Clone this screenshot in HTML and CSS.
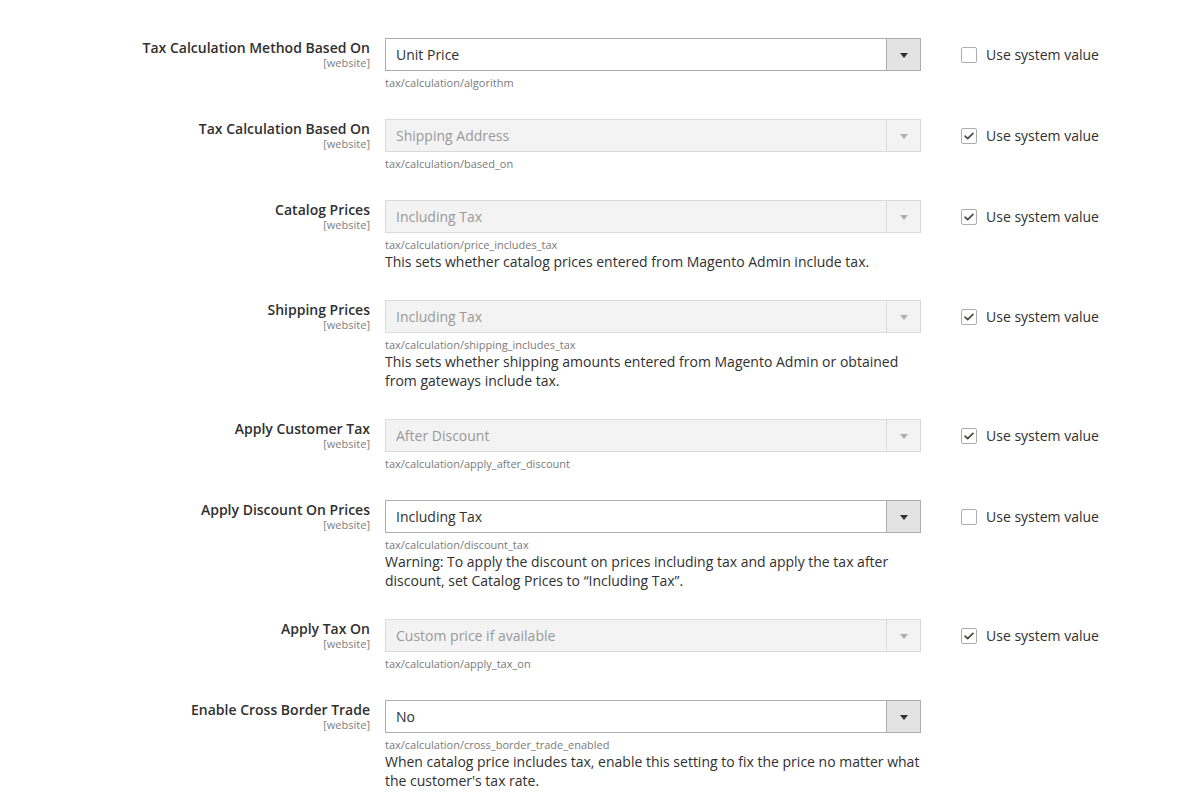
FILE: index.html
```html
<!DOCTYPE html>
<html>
<head>
<meta charset="utf-8">
<link rel="stylesheet" href="styles.css">
</head>
<body>
<div class="config">

  <div class="row">
    <div class="label"><span class="title">Tax Calculation Method Based On</span><span class="scope">[website]</span></div>
    <div class="control">
      <div class="select"><span class="value">Unit Price</span><span class="arrow"></span></div>
      <div class="path">tax/calculation/algorithm</div>
    </div>
    <label class="sys"><span class="box"></span>Use system value</label>
  </div>

  <div class="row">
    <div class="label"><span class="title">Tax Calculation Based On</span><span class="scope">[website]</span></div>
    <div class="control">
      <div class="select disabled"><span class="value">Shipping Address</span><span class="arrow"></span></div>
      <div class="path">tax/calculation/based_on</div>
    </div>
    <label class="sys"><span class="box checked"><svg viewBox="0 0 16 16"><polyline points="3.5,8.2 6.5,11 12.5,5"/></svg></span>Use system value</label>
  </div>

  <div class="row">
    <div class="label"><span class="title">Catalog Prices</span><span class="scope">[website]</span></div>
    <div class="control">
      <div class="select disabled"><span class="value">Including Tax</span><span class="arrow"></span></div>
      <div class="path">tax/calculation/price_includes_tax</div>
      <div class="comment">This sets whether catalog prices entered from Magento Admin include tax.</div>
    </div>
    <label class="sys"><span class="box checked"><svg viewBox="0 0 16 16"><polyline points="3.5,8.2 6.5,11 12.5,5"/></svg></span>Use system value</label>
  </div>

  <div class="row">
    <div class="label"><span class="title">Shipping Prices</span><span class="scope">[website]</span></div>
    <div class="control">
      <div class="select disabled"><span class="value">Including Tax</span><span class="arrow"></span></div>
      <div class="path">tax/calculation/shipping_includes_tax</div>
      <div class="comment">This sets whether shipping amounts entered from Magento Admin or obtained from gateways include tax.</div>
    </div>
    <label class="sys"><span class="box checked"><svg viewBox="0 0 16 16"><polyline points="3.5,8.2 6.5,11 12.5,5"/></svg></span>Use system value</label>
  </div>

  <div class="row">
    <div class="label"><span class="title">Apply Customer Tax</span><span class="scope">[website]</span></div>
    <div class="control">
      <div class="select disabled"><span class="value">After Discount</span><span class="arrow"></span></div>
      <div class="path">tax/calculation/apply_after_discount</div>
    </div>
    <label class="sys"><span class="box checked"><svg viewBox="0 0 16 16"><polyline points="3.5,8.2 6.5,11 12.5,5"/></svg></span>Use system value</label>
  </div>

  <div class="row">
    <div class="label"><span class="title">Apply Discount On Prices</span><span class="scope">[website]</span></div>
    <div class="control">
      <div class="select"><span class="value">Including Tax</span><span class="arrow"></span></div>
      <div class="path">tax/calculation/discount_tax</div>
      <div class="comment">Warning: To apply the discount on prices including tax and apply the tax after discount, set Catalog Prices to “Including Tax”.</div>
    </div>
    <label class="sys"><span class="box"></span>Use system value</label>
  </div>

  <div class="row">
    <div class="label"><span class="title">Apply Tax On</span><span class="scope">[website]</span></div>
    <div class="control">
      <div class="select disabled"><span class="value">Custom price if available</span><span class="arrow"></span></div>
      <div class="path">tax/calculation/apply_tax_on</div>
    </div>
    <label class="sys"><span class="box checked"><svg viewBox="0 0 16 16"><polyline points="3.5,8.2 6.5,11 12.5,5"/></svg></span>Use system value</label>
  </div>

  <div class="row">
    <div class="label"><span class="title">Enable Cross Border Trade</span><span class="scope">[website]</span></div>
    <div class="control">
      <div class="select"><span class="value">No</span><span class="arrow"></span></div>
      <div class="path">tax/calculation/cross_border_trade_enabled</div>
      <div class="comment">When catalog price includes tax, enable this setting to fix the price no matter what the customer's tax rate.</div>
    </div>
  </div>

</div>
</body>
</html>
```

FILE: styles.css
```css
html, body {
  margin: 0;
  padding: 0;
  background: #ffffff;
}
body {
  font-family: "Open Sans", "Liberation Sans", sans-serif;
  color: #303030;
  font-size: 14px;
}
.config {
  padding-top: 38px;
  display: flex;
  flex-direction: column;
  gap: 28px;
}
.row {
  display: flex;
  align-items: flex-start;
}
.label {
  width: 370px;
  display: flex;
  flex-direction: column;
  align-items: flex-end;
  text-align: right;
  flex-shrink: 0;
}
.title {
  font-weight: 600;
  font-size: 14px;
  line-height: 20px;
  color: #303030;
}
.scope {
  font-size: 11px;
  line-height: 12px;
  color: #808080;
  margin-top: -1px;
}
.control {
  width: 536px;
  margin-left: 15px;
  flex-shrink: 0;
}
.select {
  box-sizing: border-box;
  height: 33px;
  border: 1px solid #adadad;
  background: #ffffff;
  display: flex;
  align-items: center;
}
.select .value {
  flex: 1;
  padding-left: 10px;
  font-size: 14px;
  color: #303030;
}
.select .arrow {
  width: 34px;
  height: 100%;
  box-sizing: border-box;
  border-left: 1px solid #adadad;
  background: #e3e3e3;
  display: flex;
  align-items: center;
  justify-content: center;
}
.select .arrow::after {
  content: "";
  border-left: 4px solid transparent;
  border-right: 4px solid transparent;
  border-top: 5px solid #303030;
  margin-top: 1px;
}
.select.disabled {
  background: #f3f3f3;
  border-color: #dadada;
}
.select.disabled .value {
  color: #999999;
}
.select.disabled .arrow {
  background: #f3f3f3;
  border-left-color: #dadada;
}
.select.disabled .arrow::after {
  border-top-color: #b0b0b0;
}
.path {
  margin-top: 4px;
  font-size: 11px;
  line-height: 16px;
  color: #7a7a7a;
}
.comment {
  font-size: 14px;
  line-height: 19px;
  color: #303030;
  margin-top: -1px;
  margin-bottom: 1px;
}
.sys {
  margin-left: 40px;
  height: 33px;
  display: flex;
  align-items: center;
  font-size: 14px;
  color: #303030;
  white-space: nowrap;
}
.box {
  box-sizing: border-box;
  width: 16px;
  height: 16px;
  border: 1px solid #adadad;
  border-radius: 2px;
  background: #ffffff;
  margin-right: 9px;
  display: flex;
}
.box svg {
  width: 14px;
  height: 14px;
  fill: none;
  stroke: #514943;
  stroke-width: 2;
  stroke-linecap: round;
  stroke-linejoin: round;
}
```
